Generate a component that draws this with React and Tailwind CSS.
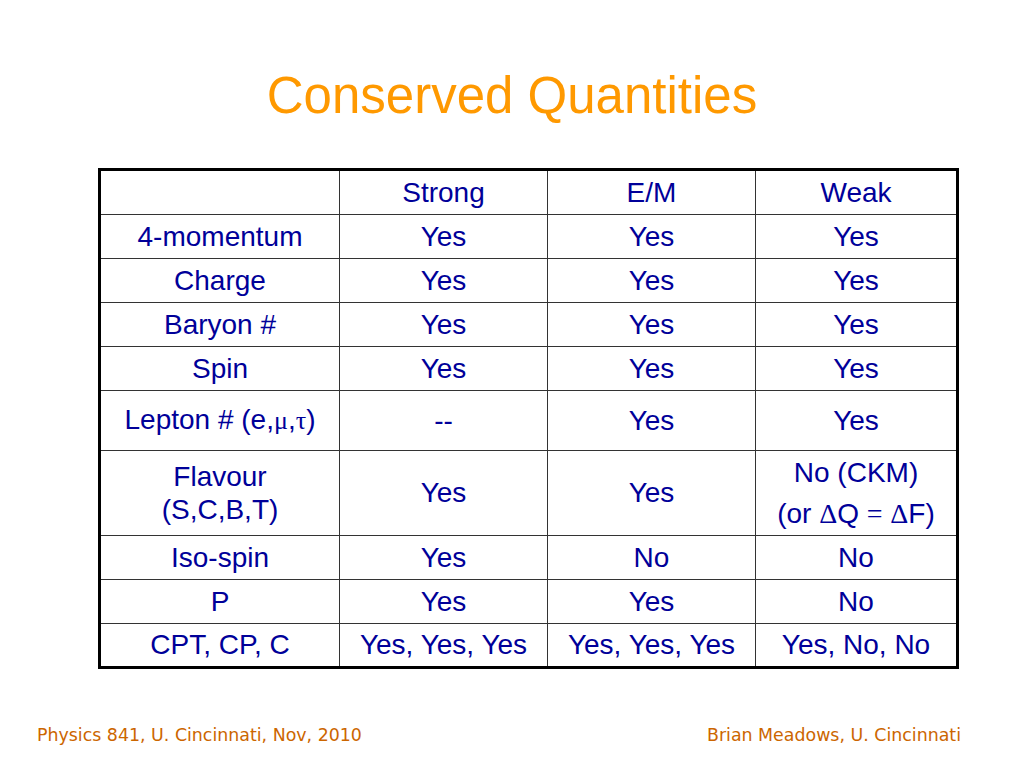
const rows = [
  ["4-momentum", "Yes", "Yes", "Yes"],
  ["Charge", "Yes", "Yes", "Yes"],
  ["Baryon #", "Yes", "Yes", "Yes"],
  ["Spin", "Yes", "Yes", "Yes"],
]

const rowsAfter = [
  ["Iso-spin", "Yes", "No", "No"],
  ["P", "Yes", "Yes", "No"],
  ["CPT, CP, C", "Yes, Yes, Yes", "Yes, Yes, Yes", "Yes, No, No"],
]

const sym = { fontFamily: '"Liberation Serif", serif' }

function Cell({ children, className = "" }) {
  return (
    <td className={`border-[1.5px] border-[#333] text-center align-middle p-0 ${className}`}>
      {children}
    </td>
  )
}

function App() {
  return (
    <div
      className="w-[1024px] h-[768px] bg-white relative overflow-hidden"
      style={{ fontFamily: '"Liberation Sans", Arial, sans-serif' }}
    >
      <h1 className="text-center text-[51px] leading-none text-[#ff9900] pt-[70px] h-[168px]">
        Conserved Quantities
      </h1>

      <div className="pl-[98px]">
        <table className="border-collapse border-[3px] border-black text-[28px] text-[#000099] leading-[30px] table-fixed w-[858px]">
          <colgroup>
            <col className="w-[240px]" />
            <col className="w-[208px]" />
            <col className="w-[208px]" />
            <col className="w-[202px]" />
          </colgroup>
          <tbody>
            <tr className="h-[45px]">
              <Cell></Cell>
              <Cell>Strong</Cell>
              <Cell>E/M</Cell>
              <Cell>Weak</Cell>
            </tr>
            {rows.map((r) => (
              <tr key={r[0]} className="h-[44px]">
                {r.map((c, i) => (
                  <Cell key={i}>{c}</Cell>
                ))}
              </tr>
            ))}
            <tr className="h-[60px]">
              <Cell>
                Lepton # (e,<span style={sym} className="text-[26px]">μ</span>,<span style={sym} className="text-[26px]">τ</span>)
              </Cell>
              <Cell>--</Cell>
              <Cell>Yes</Cell>
              <Cell>Yes</Cell>
            </tr>
            <tr className="h-[85px]">
              <Cell className="leading-[33px]">
                Flavour
                <br />
                (S,C,B,T)
              </Cell>
              <Cell>Yes</Cell>
              <Cell>Yes</Cell>
              <Cell className="leading-[41px]">
                No (CKM)
                <br />
                (or <span style={sym}>Δ</span>Q <span style={sym}>=</span> <span style={sym}>Δ</span>F)
              </Cell>
            </tr>
            {rowsAfter.map((r) => (
              <tr key={r[0]} className="h-[44px]">
                {r.map((c, i) => (
                  <Cell key={i}>{c}</Cell>
                ))}
              </tr>
            ))}
          </tbody>
        </table>
      </div>

      <div
        className="absolute left-0 right-0 top-[722px] flex justify-between pl-[37px] pr-[63px] text-[17.4px] text-[#cc6600]"
        style={{ fontFamily: '"DejaVu Sans", Tahoma, sans-serif' }}
      >
        <span>Physics 841, U. Cincinnati, Nov, 2010</span>
        <span>Brian Meadows, U. Cincinnati</span>
      </div>
    </div>
  )
}

export default App
